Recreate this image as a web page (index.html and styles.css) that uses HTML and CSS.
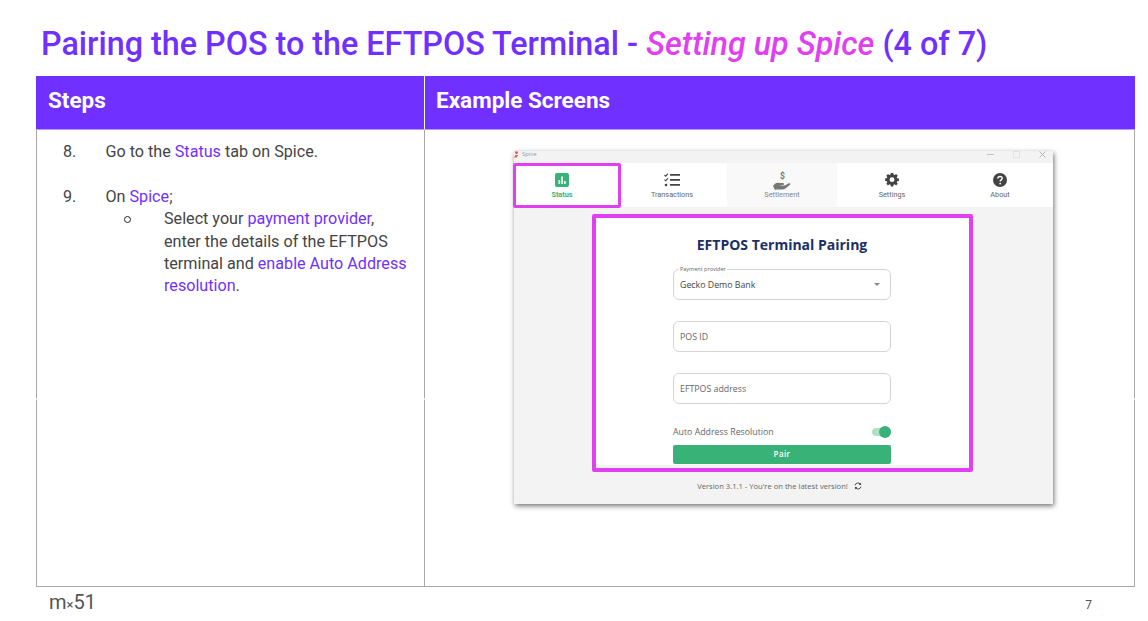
FILE: index.html
```html
<!DOCTYPE html>
<html lang="en">
<head>
<meta charset="utf-8">
<title>Pairing the POS to the EFTPOS Terminal</title>
<link rel="stylesheet" href="styles.css">
</head>
<body>
<div class="slide">
  <h1 class="title">Pairing the POS to the EFTPOS Terminal - <em class="pink">Setting up Spice</em> (4 of 7)</h1>
  <div class="table">
    <div class="head steps-head">Steps</div>
    <div class="head screens-head">Example Screens</div>
    <div class="steps">
      <div class="step"><span class="num">8.</span><span>Go to the <b class="hl">Status</b> tab on Spice.</span></div>
      <div class="step step-2"><span class="num">9.</span><span>On <b class="hl">Spice</b>;</span></div>
      <div class="sub"><span class="bullet"></span><p>Select your <b class="hl">payment provider</b>, enter the details of the EFTPOS terminal and <b class="hl">enable Auto Address resolution</b>.</p></div>
    </div>
    <div class="screens">
      <div class="window">
        <div class="titlebar">
          <svg class="logo" viewBox="0 0 6 7"><path d="M1 0h4L4 3 2 3zM2 4h3L3 7H0z" fill="#e8503a"/></svg>
          <span class="app-name">Spice</span>
          <span class="controls">
            <svg viewBox="0 0 7 7"><path d="M0 3.5h7" stroke="#c4c4c4"/></svg>
            <svg viewBox="0 0 7 7"><rect x=".5" y=".5" width="6" height="6" fill="none" stroke="#e2e2e2"/></svg>
            <svg viewBox="0 0 7 7"><path d="M.5.5l6 6M6.5.5l-6 6" stroke="#b4b4b4"/></svg>
          </span>
        </div>
        <div class="tabs">
          <div class="tab tab-active">
            <svg class="ico" viewBox="0 0 14 14"><rect width="14" height="14" rx="2" fill="#38b277"/><path d="M3.500 7h1.600v4H3.500zM6.300 3.500h1.600V11H6.300zM9.100 8h1.600v3H9.100z" fill="#fff"/></svg>
            <span>Status</span>
          </div>
          <div class="tab">
            <svg class="ico" viewBox="0 0 16 14"><path d="M.5 2l1.200 1.200L4 .6M.5 6.600l1.200 1.200L4 5.200" fill="none" stroke="#444" stroke-width="1.100"/><circle cx="2" cy="12" r="1.300" fill="#444"/><path d="M6 1h10v1.800H6zM6 6h10v1.800H6zM6 11h10v1.800H6z" fill="#444"/></svg>
            <span>Transactions</span>
          </div>
          <div class="tab tab-dim">
            <svg class="ico ico-hand" viewBox="0 0 18 19"><text x="9.500" y="8" text-anchor="middle" class="dollar">$</text><path d="M0 15c2-3 4-3.500 6-3h4c1.300 0 1.300 2 0 2H7.500v.4l4.300.1 4-2.200c1.300-.6 2.200.7 1.100 1.500L12.500 17.500c-1 .6-2 .9-3 .9H3.500L2 19z" fill="#777"/></svg>
            <span>Settlement</span>
          </div>
          <div class="tab">
            <svg class="ico" viewBox="0 0 16 16"><path fill="#444" fill-rule="evenodd" d="M6.500 0h3l.4 2.200 1.300.6L13 1.500l2 2.100-1.200 1.800.6 1.300 2.100.4v2.900l-2.100.4-.6 1.300 1.200 1.800-2 2.100-1.800-1.300-1.300.6-.4 2.100h-3l-.4-2.100-1.300-.6L3 15.600 1 13.500l1.200-1.800-.6-1.300L-.5 10V7l2.100-.4.6-1.300L1 3.600l2-2.100 1.800 1.300 1.300-.6zM8 5.500a3 3 0 1 0 0 6 3 3 0 0 0 0-6z" transform="translate(.6 -.3) scale(.93)"/></svg>
            <span>Settings</span>
          </div>
          <div class="tab tab-last">
            <svg class="ico" viewBox="0 0 16 16"><circle cx="8" cy="8" r="8" fill="#444"/><path d="M5.600 6.200c0-3 4.900-3 4.900-.2 0 1.900-2.300 1.800-2.300 3.700" fill="none" stroke="#fff" stroke-width="1.600"/><circle cx="8.200" cy="12" r="1" fill="#fff"/></svg>
            <span>About</span>
          </div>
        </div>
        <div class="content">
          <div class="panel">
            <h2 class="form-title">EFTPOS Terminal Pairing</h2>
            <div class="field field-select">
              <span class="legend">Payment provider</span>
              <span class="value">Gecko Demo Bank</span>
              <span class="caret"></span>
            </div>
            <div class="field"><span class="placeholder">POS ID</span></div>
            <div class="field"><span class="placeholder">EFTPOS address</span></div>
            <div class="toggle-row">
              <span>Auto Address Resolution</span>
              <span class="toggle"><span class="knob"></span></span>
            </div>
            <div class="pair">Pair</div>
          </div>
          <div class="version">
            <span>Version 3.1.1 - You're on the latest version!</span>
            <svg viewBox="0 0 10 10"><path d="M1.200 4.200A3.800 3.800 0 0 1 8 2.800M8.800 5.800A3.800 3.800 0 0 1 2 7.200" fill="none" stroke="#444" stroke-width="1.200"/><path d="M8.800.6v3H5.800zM1.200 9.400v-3h3z" fill="#444"/></svg>
          </div>
        </div>
        <div class="mark mark-tab"></div>
        <div class="mark mark-form"></div>
      </div>
    </div>
  </div>
  <div class="footer">
    <span class="brand">m<span class="brand-x">×</span>51</span>
    <span class="page">7</span>
  </div>
</div>
</body>
</html>
```
FILE: styles.css
```css
* { box-sizing: border-box; }
html, body { margin: 0; padding: 0; background: #fff; }
body { font-family: Roboto, "Liberation Sans", sans-serif; }
.slide { width: 1148px; height: 621px; padding: 0 13px 0 36px; overflow: hidden; display: flex; flex-direction: column; }
.title { margin: 0; height: 76px; padding: 24px 0 0 5px; font-size: 32.300px; line-height: 40px; font-weight: 500; color: #7030ff; white-space: nowrap; }
.pink { color: #e040f0; font-style: italic; }
.table { flex: none; height: 511px; display: grid; grid-template-columns: 388px 711px; grid-template-rows: 54px 457px; }
.head { background: #7030ff; color: #fff; font-weight: 700; font-size: 22.500px; line-height: 48px; padding: 0 12px; border-bottom: 1px solid #b79aff; }
.screens-head { border-left: 1px solid #fff; padding-left: 11px; }
.steps { position: relative; border-left: 1px solid #a8a8a8; border-bottom: 1px solid #a8a8a8; padding: 11px 0 0 26px; font-size: 16.150px; line-height: 22.400px; color: #444; }
.screens { position: relative; border-left: 1px solid #a8a8a8; border-right: 1px solid #a8a8a8; border-bottom: 1px solid #a8a8a8; padding: 21px 0 0 89px; }
.steps::before, .screens::before, .screens::after { content: ""; position: absolute; top: 268px; left: -1px; width: 1px; height: 2px; background: #e6e6e6; }
.screens::after { left: auto; right: -1px; }
.step { display: flex; }
.step-2 { margin-top: 22.600px; }
.num { width: 42.500px; flex: none; }
.sub { display: flex; padding-left: 61px; width: 346px; margin-top: -.3px; }
.sub p { margin: 0 0 0 33px; }
.bullet { flex: none; width: 7px; height: 7px; margin-top: 8px; border: 1px solid #222; border-radius: 50%; }
.hl { font-weight: 400; color: #7030ff; }
.window { position: relative; width: 539px; height: 353px; background: #f3f3f3; box-shadow: 1px 2px 5px rgba(0,0,0,.55); display: flex; flex-direction: column; font-family: "Open Sans", "Liberation Sans", sans-serif; }
.titlebar { height: 12px; flex: none; display: flex; align-items: center; padding-bottom: 6px; font-size: 6px; color: #999; }
.logo { width: 5px; height: 7px; margin-right: 3px; }
.controls { margin-left: auto; display: flex; gap: 19px; padding-right: 7px; }
.controls svg { width: 7px; height: 7px; }
.tabs { height: 44px; flex: none; display: flex; background: #fff; }
.tab { flex: none; width: 110px; display: flex; flex-direction: column; align-items: center; padding-top: 10px; font-family: Roboto, "Liberation Sans", sans-serif; font-size: 7.300px; line-height: 9px; color: #666; }
.tab-active { width: 103px; padding-right: 7px; color: #38b277; font-weight: 700; }
.tab-last { width: 106px; }
.tab-dim { background: #f9f9f9; color: #888; padding-top: 8px; }
.ico { height: 14px; width: 16px; margin-bottom: 3px; display: block; }
.ico-hand { height: 19px; width: 18px; margin: 0; }
.dollar { font-size: 8.500px; fill: #777; font-weight: 700; font-family: Roboto, sans-serif; }
.content { flex: 1; display: flex; flex-direction: column; align-items: center; }
.panel { width: 376px; height: 250px; margin: 8px 0 0 1px; background: #fff; padding: 20px 81px 0 77px; font-size: 8.800px; color: #555; }
.form-title { margin: 0 0 14px; height: 20px; text-align: center; color: #1a2f66; font-size: 14px; line-height: 20px; font-weight: 700; white-space: nowrap; }
.field { position: relative; height: 31px; border: 1px solid #d4d4d4; border-radius: 6px; margin-bottom: 21px; padding: 0 6px; display: flex; align-items: center; justify-content: space-between; }
.field-select { color: #444; }
.legend { position: absolute; top: -4px; left: 5px; background: #fff; padding: 0 1px; font-size: 5.500px; line-height: 7px; color: #666; }
.placeholder { color: #666; }
.caret { width: 0; height: 0; border: 3.500px solid transparent; border-top: 3.500px solid #888; border-bottom: 0; margin-right: 4px; }
.toggle-row { display: flex; justify-content: space-between; align-items: center; height: 12px; margin-top: 22px; color: #666; font-size: 8.800px; }
.toggle { position: relative; width: 19px; height: 8px; border-radius: 4px; background: #b0e0c8; }
.knob { position: absolute; right: 0; top: -2px; width: 12px; height: 12px; border-radius: 50%; background: #38b277; }
.pair { margin-top: 7px; height: 19px; border-radius: 2px; background: #38b277; color: #fff; text-align: center; font-size: 8px; line-height: 17px; font-weight: 600; letter-spacing: .4px; }
.version { margin: 16px 8px 0 0; display: flex; align-items: center; gap: 6px; font-size: 7.600px; line-height: 10px; color: #666; }
.version svg { width: 8px; height: 8px; }
.mark { position: absolute; border-style: solid; border-color: #e040f0; border-radius: 2px; pointer-events: none; }
.mark-tab { left: -1px; top: 12px; width: 108px; height: 45px; border-width: 3px; }
.mark-form { left: 78px; top: 63px; width: 381px; height: 258px; border-width: 4px; }
.footer { flex: 1; display: flex; justify-content: space-between; align-items: flex-start; padding: 3px 43px 0 13px; }
.brand { font-size: 20px; line-height: 24px; color: #555; }
.brand-x { font-size: 13px; }
.page { font-size: 12px; line-height: 14px; color: #555; margin-top: 8px; }
```
